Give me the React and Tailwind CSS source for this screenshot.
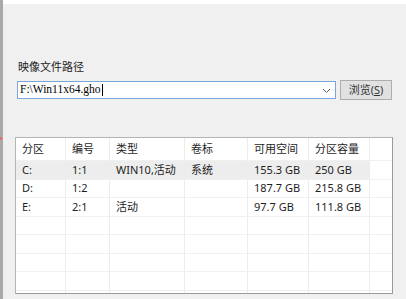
import React from 'react';

const COLS = [
  { label: '分区', w: 'w-[50px]' },
  { label: '编号', w: 'w-[44px]' },
  { label: '类型', w: 'w-[75px]' },
  { label: '卷标', w: 'w-[63px]' },
  { label: '可用空间', w: 'w-[61px]' },
  { label: '分区容量', w: 'w-[61px]' },
];

const ROWS = [
  ['C:', '1:1', 'WIN10,活动', '系统', '155.3 GB', '250 GB'],
  ['D:', '1:2', '', '', '187.7 GB', '215.8 GB'],
  ['E:', '2:1', '活动', '', '97.7 GB', '111.8 GB'],
  ['', '', '', '', '', ''],
  ['', '', '', '', '', ''],
  ['', '', '', '', '', ''],
  ['', '', '', '', '', ''],
  ['', '', '', '', '', ''],
];

const font = { fontFamily: '"Noto Sans", "Noto Sans CJK SC", sans-serif' };

const Row = ({ cells, header, active }) => (
  <div
    className={`flex shrink-0 ${header ? 'h-[22px]' : 'h-[18.5px] border-t border-[#f0f0f0]'}`}
  >
    {COLS.map((c, i) => (
      <div
        key={i}
        className={`${c.w} shrink-0 border-r border-[#ececec] pl-[6px] flex items-center whitespace-nowrap ${
          active ? 'bg-[#ededed]' : ''
        }`}
      >
        {cells[i]}
      </div>
    ))}
    <div className="flex-1" />
  </div>
);

export default function App() {
  return (
    <div
      className="w-[406px] h-[299px] flex bg-[#f0f0f0] text-[11px] text-[#1e1e1e] overflow-hidden"
      style={font}
    >
      <div className="w-[3px] shrink-0 bg-[#a9a9a9] flex flex-col">
        <div className="h-[137px]" />
        <div className="h-[3px] w-[2px] bg-[#e07070]" />
      </div>
      <div className="flex-1 flex flex-col">
        <div className="h-[4px] bg-white" />
        <div className="ml-[15px] mt-[56px] h-[14px] leading-[14px] text-[#222]">映像文件路径</div>
        <div className="mt-[6px] ml-[14px] h-[20px] flex items-center">
          <div className="w-[319px] h-[18px] bg-white border border-[#7aa6d9] flex items-center pl-[2px] pr-[4px]">
            <span
              className="text-[11.5px] leading-none text-black"
              style={{ fontFamily: '"Liberation Serif", serif' }}
            >
              F:\Win11x64.gho
            </span>
            <span className="w-px h-[12px] bg-black ml-[1px]" />
            <div className="flex-1" />
            <svg width="9" height="6" viewBox="0 0 9 6" className="mt-[1px]">
              <path d="M1 1 L4.5 4.5 L8 1" fill="none" stroke="#606060" strokeWidth="1" />
            </svg>
          </div>
          <div className="ml-[4px] w-[52px] h-[20px] bg-[#e1e1e1] border border-[#adadad] flex items-center justify-center text-[#333] text-[11px]">
            浏览(<span className="underline">S</span>)
          </div>
        </div>
        <div className="mt-[37px] ml-[12px] w-[378px] h-[157px] bg-white border border-[#b4b4b4] border-r-[#9a9a9a] border-b-[#9a9a9a] flex flex-col overflow-hidden">
          <Row header cells={COLS.map((c) => c.label)} />
          {ROWS.map((r, i) => (
            <Row key={i} cells={r} active={i === 0} />
          ))}
        </div>
      </div>
    </div>
  );
}
